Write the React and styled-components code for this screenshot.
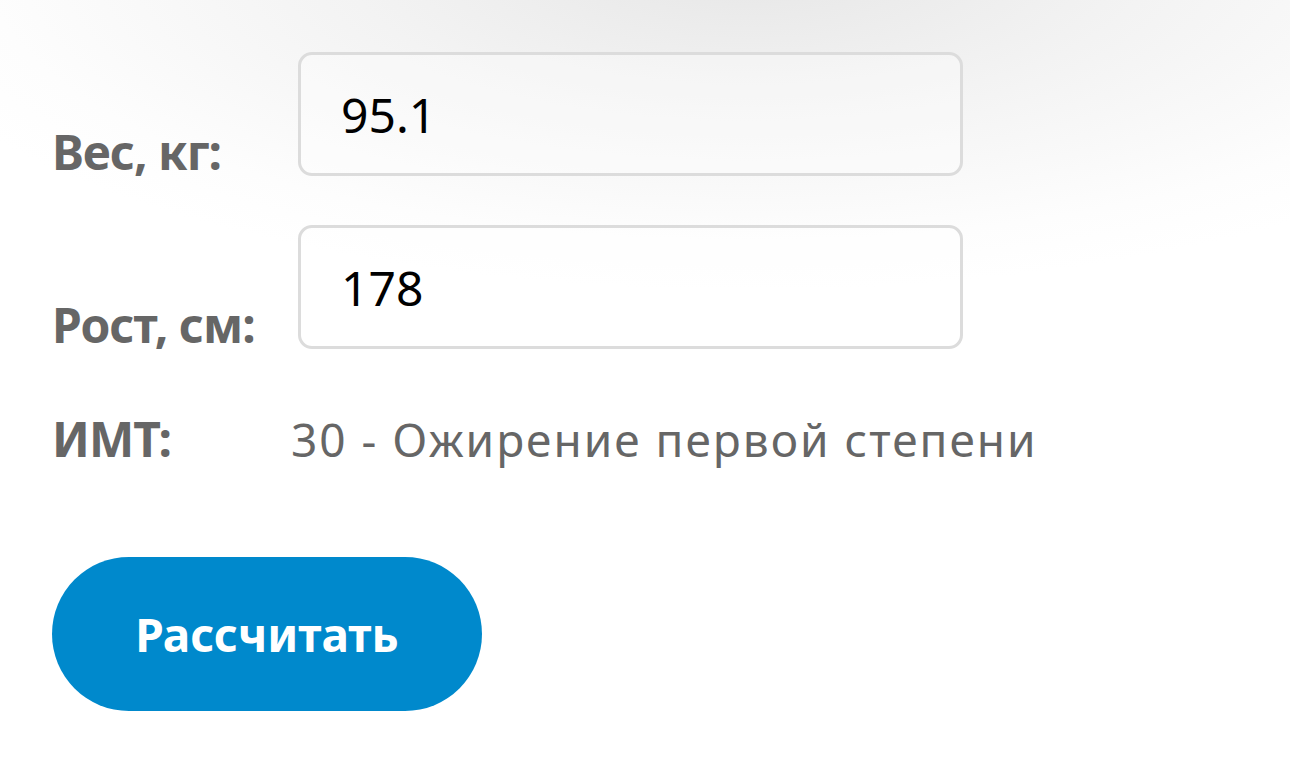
import styled, { createGlobalStyle } from "styled-components";
import { useState } from "react";

const GlobalStyle = createGlobalStyle`
  html, body {
    margin: 0;
    padding: 0;
    background: #fff;
  }
  body {
    font-family: "Noto Sans", "Open Sans", sans-serif;
  }
`;

const bmiLabel = (bmi) => {
  if (bmi < 18.5) return "Недостаточный вес";
  if (bmi < 25) return "Норма";
  if (bmi < 30) return "Избыточный вес";
  if (bmi < 35) return "Ожирение первой степени";
  if (bmi < 40) return "Ожирение второй степени";
  return "Ожирение третьей степени";
};

function calc(w, h) {
  const m = parseFloat(h) / 100;
  const bmi = parseFloat(w) / (m * m);
  if (!isFinite(bmi)) return "";
  return `${Math.round(bmi)} - ${bmiLabel(bmi)}`;
}

export default function App() {
  const [weight, setWeight] = useState("95.1");
  const [height, setHeight] = useState("178");
  const [result, setResult] = useState(() => calc("95.1", "178"));

  return (
    <Page>
      <GlobalStyle />
      <Form onSubmit={(e) => e.preventDefault()}>
        <Label htmlFor="weight">Вес, кг:</Label>
        <Input id="weight" value={weight} onChange={(e) => setWeight(e.target.value)} />

        <Label htmlFor="height">Рост, см:</Label>
        <Input id="height" value={height} onChange={(e) => setHeight(e.target.value)} />

        <ResultLabel>ИМТ:</ResultLabel>
        <ResultValue>{result}</ResultValue>
      </Form>
      <CalcButton type="button" onClick={() => setResult(calc(weight, height))}>
        Рассчитать
      </CalcButton>
    </Page>
  );
}

const Page = styled.div`
  min-height: 782px;
  box-sizing: border-box;
  padding: 52px 0 0 52px;
  background: radial-gradient(ellipse 900px 330px at 58% -40px, #e6e6e6 0%, #f3f3f3 45%, #fdfdfd 85%, #ffffff 100%);
`;

const Form = styled.form`
  display: grid;
  grid-template-columns: 246px 665px;
  row-gap: 49px;
  align-items: end;
`;

const Label = styled.label`
  font-size: 48px;
  font-weight: 700;
  color: #666;
  line-height: 1;
  letter-spacing: -1px;
`;

const Input = styled.input`
  box-sizing: border-box;
  width: 665px;
  height: 124px;
  padding: 0 40px;
  border: 3px solid #dcdcdc;
  border-radius: 14px;
  background: rgba(255, 255, 255, 0.35);
  font-family: "Noto Sans", "Open Sans", sans-serif;
  font-size: 48px;
  color: #000;
  outline: none;
`;

const ResultLabel = styled.div`
  font-size: 48px;
  font-weight: 700;
  color: #666;
  line-height: 60px;
  letter-spacing: -1px;
  margin-top: 11px;
`;

const ResultValue = styled.div`
  font-size: 46px;
  color: #666;
  line-height: 60px;
  letter-spacing: 2px;
  margin-left: -7px;
  margin-top: 11px;
  white-space: nowrap;
`;

const CalcButton = styled.button`
  display: flex;
  align-items: center;
  justify-content: center;
  width: 430px;
  height: 154px;
  margin-top: 88px;
  border: none;
  border-radius: 77px;
  background: #0089cc;
  color: #fff;
  font-family: "Noto Sans", "Open Sans", sans-serif;
  font-size: 46px;
  font-weight: 700;
  cursor: pointer;
`;
